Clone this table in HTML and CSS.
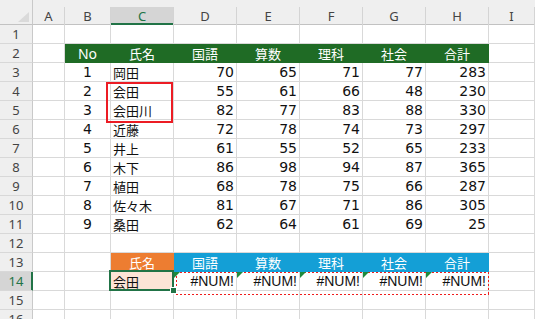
FILE: index.html
```html
<!DOCTYPE html>
<html lang="ja">
<head>
<meta charset="utf-8">
<title>Sheet</title>
<link rel="stylesheet" href="styles.css">
</head>
<body>
<div class="sheet">
  <div class="corner"><span class="tri"></span></div>
  <div class="ch"><span>A</span></div>
  <div class="ch"><span>B</span></div>
  <div class="ch sel"><span>C</span></div>
  <div class="ch"><span>D</span></div>
  <div class="ch"><span>E</span></div>
  <div class="ch"><span>F</span></div>
  <div class="ch"><span>G</span></div>
  <div class="ch"><span>H</span></div>
  <div class="ch"><span>I</span></div>

  <div class="rh">1</div><div class="c"></div><div class="c"></div><div class="c"></div><div class="c"></div><div class="c"></div><div class="c"></div><div class="c"></div><div class="c"></div><div class="c"></div>

  <div class="rh">2</div><div class="c"></div>
  <div class="c hd lat">No</div><div class="c hd j">氏名</div><div class="c hd j">国語</div><div class="c hd j">算数</div><div class="c hd j">理科</div><div class="c hd j">社会</div><div class="c hd j">合計</div>
  <div class="c"></div>

  <div class="rh">3</div><div class="c"></div><div class="c ctr">1</div><div class="c j">岡田</div><div class="c num">70</div><div class="c num">65</div><div class="c num">71</div><div class="c num">77</div><div class="c num">283</div><div class="c"></div>
  <div class="rh">4</div><div class="c"></div><div class="c ctr">2</div><div class="c j">会田</div><div class="c num">55</div><div class="c num">61</div><div class="c num">66</div><div class="c num">48</div><div class="c num">230</div><div class="c"></div>
  <div class="rh">5</div><div class="c"></div><div class="c ctr">3</div><div class="c j">会田川</div><div class="c num">82</div><div class="c num">77</div><div class="c num">83</div><div class="c num">88</div><div class="c num">330</div><div class="c"></div>
  <div class="rh">6</div><div class="c"></div><div class="c ctr">4</div><div class="c j">近藤</div><div class="c num">72</div><div class="c num">78</div><div class="c num">74</div><div class="c num">73</div><div class="c num">297</div><div class="c"></div>
  <div class="rh">7</div><div class="c"></div><div class="c ctr">5</div><div class="c j">井上</div><div class="c num">61</div><div class="c num">55</div><div class="c num">52</div><div class="c num">65</div><div class="c num">233</div><div class="c"></div>
  <div class="rh">8</div><div class="c"></div><div class="c ctr">6</div><div class="c j">木下</div><div class="c num">86</div><div class="c num">98</div><div class="c num">94</div><div class="c num">87</div><div class="c num">365</div><div class="c"></div>
  <div class="rh">9</div><div class="c"></div><div class="c ctr">7</div><div class="c j">植田</div><div class="c num">68</div><div class="c num">78</div><div class="c num">75</div><div class="c num">66</div><div class="c num">287</div><div class="c"></div>
  <div class="rh">10</div><div class="c"></div><div class="c ctr">8</div><div class="c j">佐々木</div><div class="c num">81</div><div class="c num">67</div><div class="c num">71</div><div class="c num">86</div><div class="c num">305</div><div class="c"></div>
  <div class="rh">11</div><div class="c"></div><div class="c ctr">9</div><div class="c j">桑田</div><div class="c num">62</div><div class="c num">64</div><div class="c num">61</div><div class="c num">69</div><div class="c num">25</div><div class="c"></div>

  <div class="rh">12</div><div class="c"></div><div class="c"></div><div class="c"></div><div class="c"></div><div class="c"></div><div class="c"></div><div class="c"></div><div class="c"></div><div class="c"></div>

  <div class="rh">13</div><div class="c"></div><div class="c"></div>
  <div class="c or j">氏名</div><div class="c bl j">国語</div><div class="c bl j">算数</div><div class="c bl j">理科</div><div class="c bl j">社会</div><div class="c bl j">合計</div>
  <div class="c"></div>

  <div class="rh sel">14</div><div class="c"></div><div class="c"></div>
  <div class="c pk j active">会田</div>
  <div class="c err">#NUM!</div><div class="c err">#NUM!</div><div class="c err">#NUM!</div><div class="c err">#NUM!</div><div class="c err">#NUM!</div>
  <div class="c"></div>

  <div class="rh">15</div><div class="c"></div><div class="c"></div><div class="c"></div><div class="c"></div><div class="c"></div><div class="c"></div><div class="c"></div><div class="c"></div><div class="c"></div>
  <div class="rh">16</div><div class="c"></div><div class="c"></div><div class="c"></div><div class="c"></div><div class="c"></div><div class="c"></div><div class="c"></div><div class="c"></div><div class="c"></div>

  <div class="mark-red"></div>
  <div class="mark-dots"></div>
</div>
</body>
</html>
```

FILE: styles.css
```css
html, body {
  margin: 0;
  padding: 0;
  background: #ffffff;
}

.sheet {
  position: relative;
  width: 535px;
  height: 319px;
  overflow: hidden;
  display: grid;
  grid-template-columns: 33px 32px 46px repeat(6, 63px) 1fr;
  grid-template-rows: 25px repeat(16, 19px);
  font-family: "DejaVu Sans", "Noto Sans CJK JP", sans-serif;
  font-size: 14px;
  color: #111;
}

.corner {
  background: #efefef;
  border-right: 1px solid #c9c9c9;
  border-bottom: 1px solid #c2c2c2;
  display: flex;
  justify-content: flex-end;
  align-items: flex-end;
  padding: 0 3px 2px 0;
  box-sizing: border-box;
}

.tri {
  width: 11px;
  height: 10px;
  background: #dadada;
  clip-path: polygon(100% 0, 100% 100%, 0 100%);
}

.ch {
  background: #efefef;
  border-bottom: 1px solid #c2c2c2;
  padding-top: 7px;
  box-sizing: border-box;
  display: flex;
  font-family: "Noto Sans", "DejaVu Sans", sans-serif;
  font-size: 13px;
  color: #444;
}

.ch span {
  flex: 1;
  display: flex;
  align-items: center;
  justify-content: center;
  border-right: 1px solid #d4d4d4;
  height: 18px;
  margin-bottom: -1px;
  line-height: 17px;
}

.ch.sel span {
  background: #d5d5d5;
  box-shadow: inset 0 -2px 0 #217346;
  color: #217346;
}

.rh {
  background: #efefef;
  border-right: 1px solid #c9c9c9;
  border-bottom: 1px solid #d8d8d8;
  box-sizing: border-box;
  text-align: center;
  line-height: 19px;
  font-family: "Noto Sans", "DejaVu Sans", sans-serif;
  font-size: 13px;
  color: #444;
}

.rh.sel {
  background: #d5d5d5;
  color: #217346;
  border-right-color: #217346;
  box-shadow: inset -1px 0 0 #217346;
}

.c {
  position: relative;
  border-right: 1px solid #d9d9d9;
  border-bottom: 1px solid #d9d9d9;
  box-sizing: border-box;
  padding: 0 2px;
  line-height: 19px;
  white-space: nowrap;
  overflow: visible;
}

.j {
  font-family: "Noto Sans CJK JP", sans-serif;
  font-size: 13px;
}

.lat {
  font-family: "Noto Sans", sans-serif;
  font-size: 14px;
}

.num {
  text-align: right;
}

.ctr {
  text-align: center;
}

.hd {
  background: #1f6b25;
  border-color: #1f6b25;
  color: #fff;
  text-align: center;
}

.or {
  background: #ed7d31;
  border-color: #ed7d31;
  color: #fff;
  text-align: center;
}

.bl {
  background: #149fd6;
  border-color: #149fd6;
  color: #fff;
  text-align: center;
}

.pk {
  background: #fce4d6;
}

.active::after {
  content: "";
  position: absolute;
  top: -2px;
  left: -2px;
  right: -1px;
  bottom: -1px;
  border: 2px solid #217346;
  z-index: 2;
}

.active::before {
  content: "";
  position: absolute;
  right: -4px;
  bottom: -4px;
  width: 5px;
  height: 5px;
  background: #217346;
  border: 1px solid #fff;
  z-index: 3;
}

.err {
  text-align: right;
  font-family: "Liberation Sans", sans-serif;
  font-size: 14px;
}

.err::before {
  content: "";
  position: absolute;
  top: 0;
  left: 0;
  width: 6px;
  height: 6px;
  background: #1e8a3c;
  clip-path: polygon(0 0, 100% 0, 0 100%);
  z-index: 2;
}

.mark-red {
  position: absolute;
  left: 106px;
  top: 82px;
  width: 67px;
  height: 41px;
  box-sizing: border-box;
  border: 2px solid #ec1c24;
}

.mark-dots {
  position: absolute;
  left: 176px;
  top: 272px;
  width: 313px;
  height: 23px;
  box-sizing: border-box;
  background:
    repeating-linear-gradient(90deg, #f01c1c 0 2px, transparent 2px 4px) left top / 100% 1px no-repeat,
    repeating-linear-gradient(90deg, #f01c1c 0 2px, transparent 2px 4px) left bottom / 100% 1px no-repeat,
    repeating-linear-gradient(180deg, #f01c1c 0 2px, transparent 2px 4px) left top / 1px 100% no-repeat,
    repeating-linear-gradient(180deg, #f01c1c 0 2px, transparent 2px 4px) right top / 1px 100% no-repeat;
}
```
